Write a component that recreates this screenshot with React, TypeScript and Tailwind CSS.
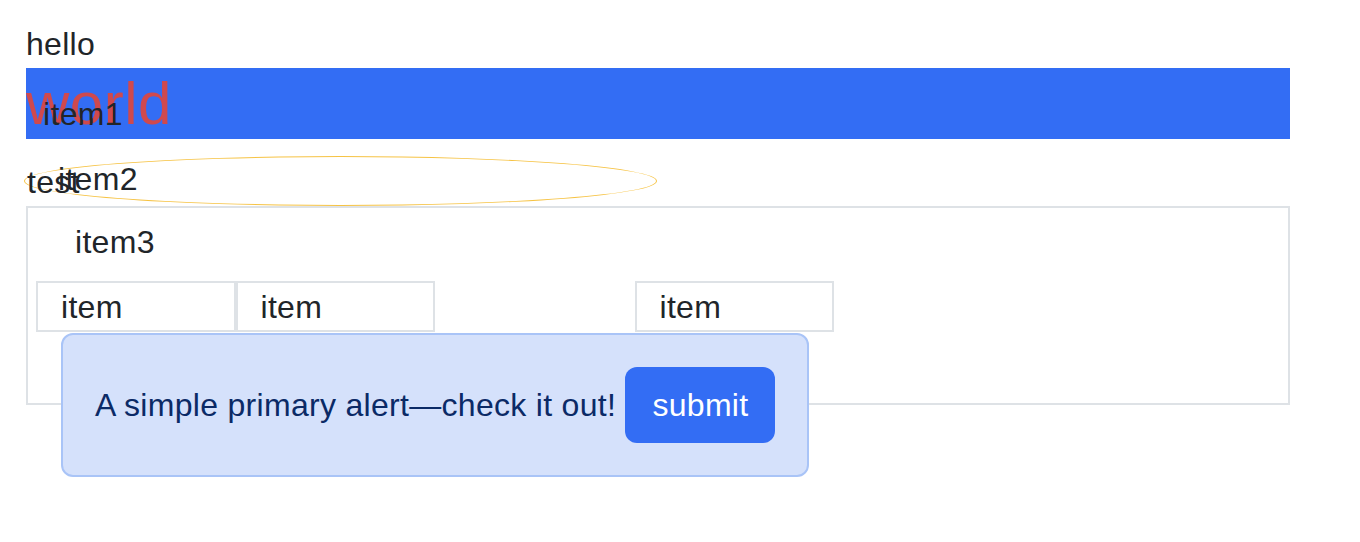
import React from 'react';

// layout playground: overlapping rows, an ellipse, an item grid and an alert
const items = ['item', 'item', 'item', 'item'];

export default function App() {
  return (
    <div className="min-h-screen bg-white pt-[20px] pl-[26px] font-['Liberation_Sans',Arial,sans-serif] text-[32px] leading-[48px] tracking-[0.3px] text-[#212529]">
      <div className="w-[1264px]">
        <div>hello</div>

        {/* blue band */}
        <div className="relative h-[71px] bg-[#336df4]">
          <div className="text-[60px] leading-[71px] tracking-[0.5px] text-[#cf494e]">world</div>
          <div className="absolute left-[17px] top-[22px]">item1</div>
        </div>

        {/* ellipse */}
        <div className="relative mt-[17px] -ml-[2px] h-[50px] w-[633px] rounded-[50%] border-[1.75px] border-[#f6c344]">
          <div className="-mt-[2.5px] pl-[33px]">item2</div>
          <div className="absolute left-[2px] top-[0.5px]">test</div>
        </div>

        {/* bordered box */}
        <div className="h-[199px] border-2 border-[#dee2e6] pt-[10px] pl-[8px]">
          <div className="ml-[39px]">item3</div>
          <div className="mt-[15px] flex">
            {items.map((label, i) => (
              <div
                key={i}
                className={`h-[51px] w-[199.5px] border-2 border-[#dee2e6] pl-[23px] leading-[48px] ${
                  i === 2 ? 'invisible' : ''
                }`}
              >
                {label}
              </div>
            ))}
          </div>
          <div className="relative mt-[1px] ml-[25px] w-[748px] whitespace-nowrap rounded-[12px] border-2 border-[#a9c4f7] bg-[#d5e1fb] p-[32px] text-[#0b2a66]">
            A simple primary alert—check it out!{' '}
            <button className="inline-block rounded-[12px] border-2 border-transparent bg-[#336df4] px-[25px] py-[12px] text-[32px] leading-[48px] tracking-[0.3px] text-white">
              submit
            </button>
          </div>
        </div>
      </div>
    </div>
  );
}
